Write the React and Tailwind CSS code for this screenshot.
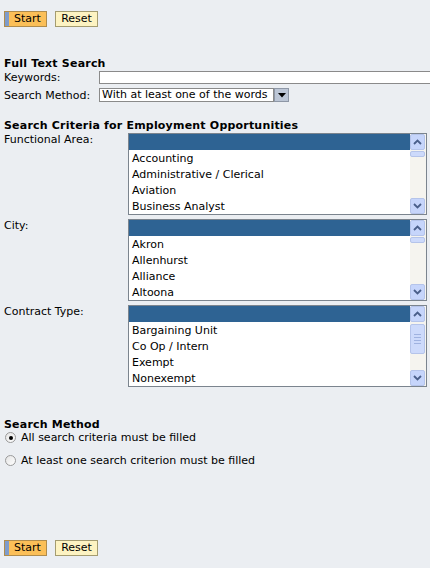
import React from "react";

function Buttons() {
  return (
    <div className="flex gap-[8px] pl-[4px]">
      <div className="flex h-[16px] w-[43px] border border-[#b08c4c] bg-[#fbbf58]">
        <div className="w-[4px] bg-[#7f9ccb]" />
        <span className="flex-1 text-center leading-[14px]">Start</span>
      </div>
      <div className="h-[16px] w-[43px] border border-[#a49c70] bg-[#fdf3c2] text-center leading-[14px]">
        Reset
      </div>
    </div>
  );
}

function Chevron({ up }) {
  return (
    <svg width="9" height="6" viewBox="0 0 9 6">
      <polyline
        points={up ? "1,5 4.5,1.5 8,5" : "1,1 4.5,4.5 8,1"}
        fill="none"
        stroke="#4a5f8a"
        strokeWidth="1.8"
      />
    </svg>
  );
}

function ScrollBtn({ up }) {
  return (
    <div className="flex h-[16px] w-[15px] items-center justify-center rounded-[2px] border border-[#b5c4ea] bg-[#c6d5fb]">
      <Chevron up={up} />
    </div>
  );
}

function Scrollbar({ big }) {
  return (
    <div className="flex w-[16px] shrink-0 flex-col justify-between bg-[#f5f4ef]">
      <div className="flex flex-col">
        <ScrollBtn up />
        {big ? (
          <div className="mt-[2px] flex h-[30px] w-[15px] flex-col items-center justify-center gap-[2px] rounded-[2px] border border-[#b5c4ea] bg-[#cddafb]">
            <div className="h-px w-[7px] bg-[#9fb2e0]" />
            <div className="h-px w-[7px] bg-[#9fb2e0]" />
            <div className="h-px w-[7px] bg-[#9fb2e0]" />
            <div className="h-px w-[7px] bg-[#9fb2e0]" />
          </div>
        ) : (
          <div className="mt-[1px] h-[6px] w-[15px] rounded-[2px] border border-[#b5c4ea] bg-[#cddafb]" />
        )}
      </div>
      <ScrollBtn />
    </div>
  );
}

function ListBox({ items, big }) {
  return (
    <div className="flex h-[82px] w-[299px] shrink-0 border border-[#7b848e] bg-white">
      <div className="flex-1 overflow-hidden">
        <div className="h-[16px] bg-[#2e6393]" />
        {items.map((i) => (
          <div key={i} className="h-[16px] pl-[3px] leading-[17px]">
            {i}
          </div>
        ))}
      </div>
      <Scrollbar big={big} />
    </div>
  );
}

function Radio({ checked }) {
  return (
    <div className="flex h-[11px] w-[11px] shrink-0 items-center justify-center rounded-full border border-[#9a9a9a] bg-gradient-to-br from-[#e4e4e4] to-white">
      {checked && <div className="h-[4px] w-[4px] rounded-full bg-black" />}
    </div>
  );
}

export default function App() {
  return (
    <div className="h-[568px] w-[430px] overflow-hidden bg-[#ebeef2] font-['DejaVu_Sans',Verdana,sans-serif] text-[11px] leading-[13px] text-black">
      <div className="pt-[11px]">
        <Buttons />
      </div>

      <div className="mt-[30px] pl-[4px] font-bold tracking-[0.2px]">Full Text Search</div>
      <div className="mt-[1px] flex h-[13px] items-center pl-[4px]">
        <div className="w-[95px] shrink-0">Keywords:</div>
        <div className="h-[13px] w-[340px] shrink-0 border border-[#8a8a8a] bg-white" />
      </div>
      <div className="mt-[4px] flex h-[14px] items-center pl-[4px]">
        <div className="w-[95px] shrink-0">Search Method:</div>
        <div className="flex h-[14px] shrink-0">
          <div className="w-[175px] border border-[#8a8a8a] bg-white pl-[2px] leading-[12px]">
            With at least one of the words
          </div>
          <div className="flex w-[15px] items-center justify-center border border-[#8e97a6] bg-[#bcc6d6]">
            <svg width="8" height="5" viewBox="0 0 8 5">
              <polygon points="0,0 8,0 4,4.5" fill="#000" />
            </svg>
          </div>
        </div>
      </div>

      <div className="mt-[17px] pl-[4px] font-bold tracking-[0.2px]">
        Search Criteria for Employment Opportunities
      </div>
      <div className="mt-[1px] flex flex-col gap-[4px] pl-[4px]">
        <div className="flex">
          <div className="w-[124px] shrink-0">Functional Area:</div>
          <ListBox
            items={[
              "Accounting",
              "Administrative / Clerical",
              "Aviation",
              "Business Analyst",
            ]}
          />
        </div>
        <div className="flex">
          <div className="w-[124px] shrink-0">City:</div>
          <ListBox items={["Akron", "Allenhurst", "Alliance", "Altoona"]} />
        </div>
        <div className="flex">
          <div className="w-[124px] shrink-0">Contract Type:</div>
          <ListBox
            big
            items={["Bargaining Unit", "Co Op / Intern", "Exempt", "Nonexempt"]}
          />
        </div>
      </div>

      <div className="mt-[31px] pl-[4px] font-bold tracking-[0.2px]">Search Method</div>
      <div className="flex h-[13px] items-center gap-[5px] pl-[5px]">
        <Radio checked />
        <span>All search criteria must be filled</span>
      </div>
      <div className="mt-[10px] flex h-[13px] items-center gap-[5px] pl-[5px]">
        <Radio />
        <span>At least one search criterion must be filled</span>
      </div>

      <div className="mt-[73px]">
        <Buttons />
      </div>
    </div>
  );
}
